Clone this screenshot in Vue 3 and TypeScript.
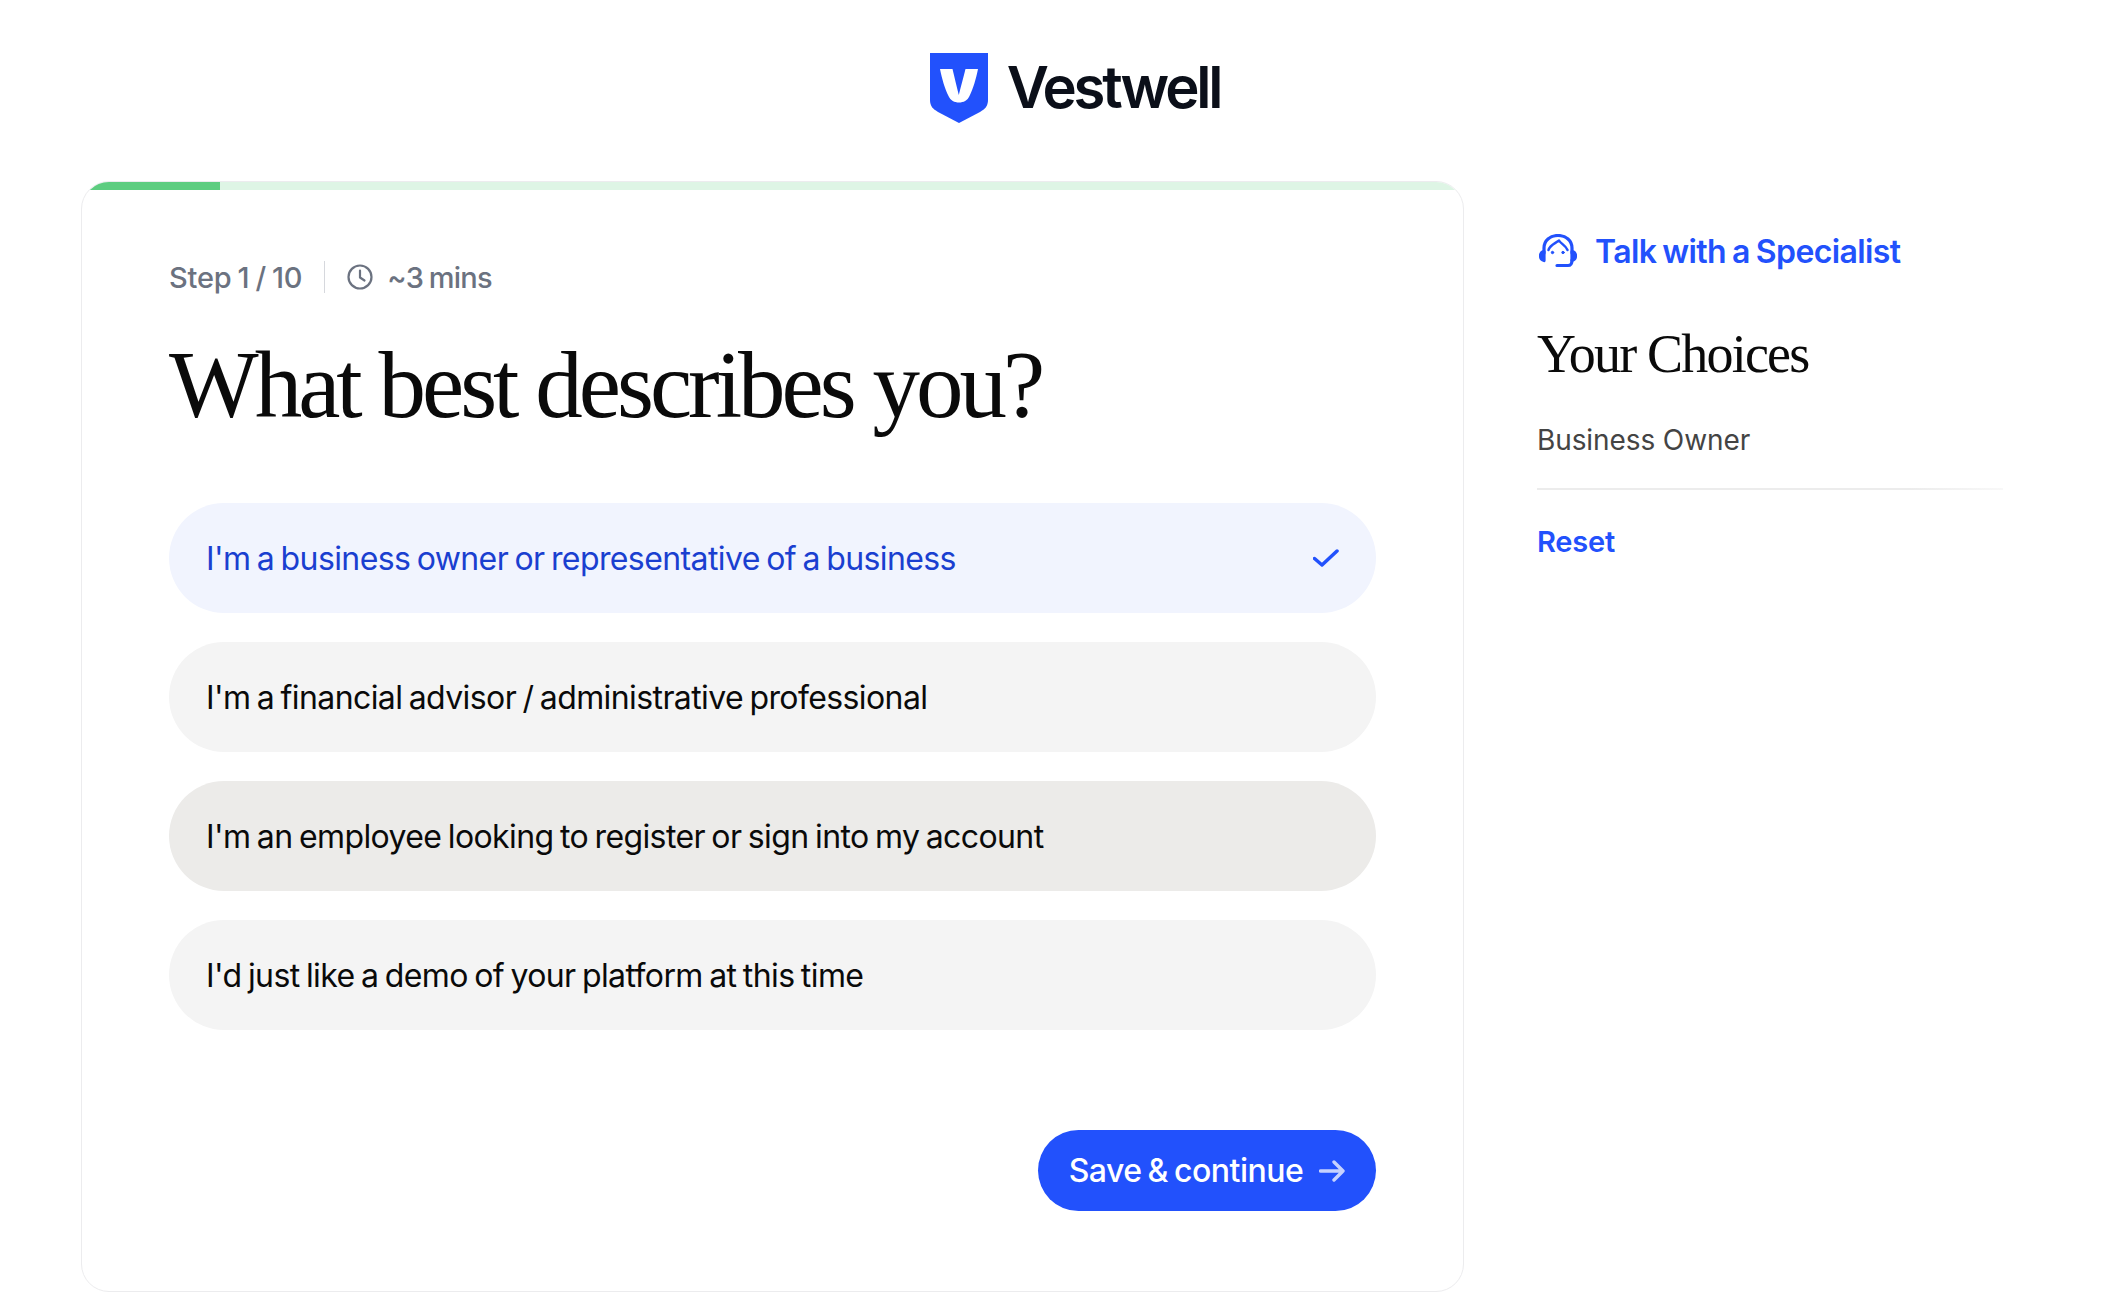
<script setup lang="ts">
interface Option { label: string; state: string }
const options: Option[] = [
  { label: "I'm a business owner or representative of a business", state: 'selected' },
  { label: "I'm a financial advisor / administrative professional", state: 'plain' },
  { label: "I'm an employee looking to register or sign into my account", state: 'hover' },
  { label: "I'd just like a demo of your platform at this time", state: 'plain' },
]
</script>

<template>
  <div class="page">
    <header class="top">
      <svg class="shield" width="58" height="70" viewBox="0 0 58 70">
        <path d="M0 0H58V47C58 53 55 56 50 59L29 70L8 59C3 56 0 53 0 47Z" fill="#2251fc" />
        <path d="M10 16H22.500C24.500 24 26.500 33 28.800 42C31 33 33.500 24 35.500 16H48C46 26 43 36 39.500 43C37.500 47.500 33.500 49.500 29 49.500C24.500 49.500 20.500 47.500 18.500 43C15 36 12 26 10 16Z" fill="#fff" />
      </svg>
      <span class="brand">Vestwell</span>
    </header>

    <main class="main">
      <section class="card">
        <div class="progress"><div class="progress-fill"></div></div>
        <div class="card-body">
          <div class="meta">
            <span>Step 1 / 10</span>
            <span class="meta-sep"></span>
            <svg class="clock" width="26" height="26" viewBox="0 0 26 26" fill="none" stroke="#6b7280" stroke-width="2.200" stroke-linecap="round" stroke-linejoin="round">
              <circle cx="13" cy="13" r="11.500" />
              <path d="M13 6.500V13.500L17.500 16.500" />
            </svg>
            <span class="mins">~3 mins</span>
          </div>
          <h1 class="title">What best describes you?</h1>
          <div class="options">
            <div v-for="o in options" :key="o.label" class="option" :class="o.state">
              <span>{{ o.label }}</span>
              <svg v-if="o.state === 'selected'" width="26" height="18" viewBox="0 0 26 18" fill="none" stroke="#2251fc" stroke-width="3.500" stroke-linecap="round" stroke-linejoin="round">
                <path d="M1.500 9.500L9 16L24 2" />
              </svg>
            </div>
          </div>
          <div class="actions">
            <button class="save">
              <span>Save &amp; continue</span>
              <svg width="26" height="22" viewBox="0 0 26 22" fill="none" stroke="#c6d2fe" stroke-width="3.400" stroke-linecap="round" stroke-linejoin="round">
                <path d="M1.500 11H24M15 2L24 11L15 20" />
              </svg>
            </button>
          </div>
        </div>
      </section>

      <aside class="side">
        <a class="talk">
          <svg class="talk-icon" width="38" height="34" viewBox="0 0 38 34" fill="none" stroke="#2251fc" stroke-width="3.200" stroke-linecap="round" stroke-linejoin="round">
            <path d="M5 19V14C5 6.500 11 1.500 19 1.500C27 1.500 33 6.500 33 14V19" />
            <path d="M9.500 16C11 11 15 10 20 6.500C22 10 26.500 11 28.500 16" stroke-width="2.500" />
            <path d="M5 17.500C2.500 18 1.500 20 1.500 22C1.500 24.500 3 26 5 26.500Z" fill="#2251fc" />
            <path d="M33 17.500C35.500 18 36.500 20 36.500 22C36.500 24.500 35 26 33 26.500Z" fill="#2251fc" />
            <path d="M33 26C33 30 32 31.500 29 31.500H18" />
            <circle cx="13.500" cy="18.500" r="1.200" fill="#2251fc" stroke-width="1" />
            <circle cx="24" cy="18.500" r="1.200" fill="#2251fc" stroke-width="1" />
          </svg>
          <span>Talk with a Specialist</span>
        </a>
        <h2 class="choices">Your Choices</h2>
        <p class="choice">Business Owner</p>
        <div class="rule"></div>
        <a class="reset">Reset</a>
      </aside>
    </main>
  </div>
</template>

<style>
html, body { margin: 0; background: #fff; }
</style>

<style scoped>
.page {
  height: 1310px;
  overflow: hidden;
  font-family: Inter, "Liberation Sans", sans-serif;
  color: #0a0d14;
}
.top {
  height: 181px;
  box-sizing: border-box;
  padding: 53px 0 0 38px;
  display: flex;
  justify-content: center;
  align-items: flex-start;
  gap: 19px;
}
.brand {
  font-size: 58px;
  line-height: 68px;
  font-weight: 600;
  letter-spacing: -3.200px;
  color: #0b0f19;
}
.main {
  display: flex;
  padding-left: 81px;
  align-items: flex-start;
}
.card {
  width: 1383px;
  height: 1111px;
  box-sizing: border-box;
  border: 1px solid #ececee;
  border-radius: 28px;
  overflow: hidden;
  flex-shrink: 0;
}
.progress {
  height: 8px;
  background: #def5e5;
}
.progress-fill {
  width: 138px;
  height: 100%;
  background: #5dcd80;
}
.card-body {
  padding: 70px 87px 0;
  display: flex;
  flex-direction: column;
}
.meta {
  display: flex;
  align-items: center;
  gap: 22px;
  height: 34px;
  font-size: 29px;
  font-weight: 500;
  letter-spacing: -0.2px;
  word-spacing: -1.500px;
  color: #6b7280;
}
.meta-sep {
  width: 1px;
  height: 32px;
  background: #d6d8dd;
}
.clock {
  margin-right: -8px;
}
.mins {
  letter-spacing: -0.7px;
}
.title {
  margin: 36px 0 0;
  font-family: "Liberation Serif", serif;
  font-weight: 400;
  font-size: 95px;
  line-height: 110px;
  letter-spacing: -4px;
  color: #0a0a0a;
}
.options {
  margin-top: 63px;
  display: flex;
  flex-direction: column;
  gap: 29px;
}
.option {
  height: 110px;
  border-radius: 55px;
  padding: 0 37px;
  display: flex;
  align-items: center;
  justify-content: space-between;
  font-size: 32px;
  letter-spacing: -0.6px;
  word-spacing: -2px;
  color: #0a0a0a;
  background: #f4f4f4;
}
.option.selected {
  background: #f1f4fe;
  color: #1a3fd0;
}
.option.hover {
  background: #ecebe9;
}
.actions {
  margin-top: 100px;
  display: flex;
  justify-content: flex-end;
}
.save {
  width: 338px;
  height: 81px;
  border: 0;
  border-radius: 41px;
  background: #2251fc;
  color: #fff;
  font-family: inherit;
  font-size: 32px;
  font-weight: 500;
  letter-spacing: -0.5px;
  word-spacing: -2px;
  display: flex;
  align-items: center;
  justify-content: center;
  gap: 16px;
  padding: 0;
}
.side {
  margin-left: 73px;
  width: 466px;
  padding-top: 52px;
  display: flex;
  flex-direction: column;
  align-items: flex-start;
}
.talk {
  display: flex;
  align-items: center;
  gap: 18px;
  height: 36px;
  font-size: 32px;
  font-weight: 600;
  letter-spacing: -0.6px;
  word-spacing: -1.500px;
  color: #2251fc;
}
.talk-icon {
  margin-left: 2px;
}
.choices {
  margin: 53px 0 0;
  font-family: "Liberation Serif", serif;
  font-weight: 400;
  font-size: 54px;
  line-height: 64px;
  letter-spacing: -1.800px;
  color: #0a0a0a;
}
.choice {
  margin: 36px 0 0;
  font-size: 28px;
  line-height: 36px;
  letter-spacing: -0.1px;
  color: #444;
}
.rule {
  margin-top: 30px;
  align-self: stretch;
  height: 2px;
  background: linear-gradient(to right, #ececec 80%, #f8f8f8);
}
.reset {
  margin-top: 34px;
  font-size: 29px;
  line-height: 36px;
  font-weight: 600;
  letter-spacing: -0.2px;
  color: #2251fc;
}
</style>
